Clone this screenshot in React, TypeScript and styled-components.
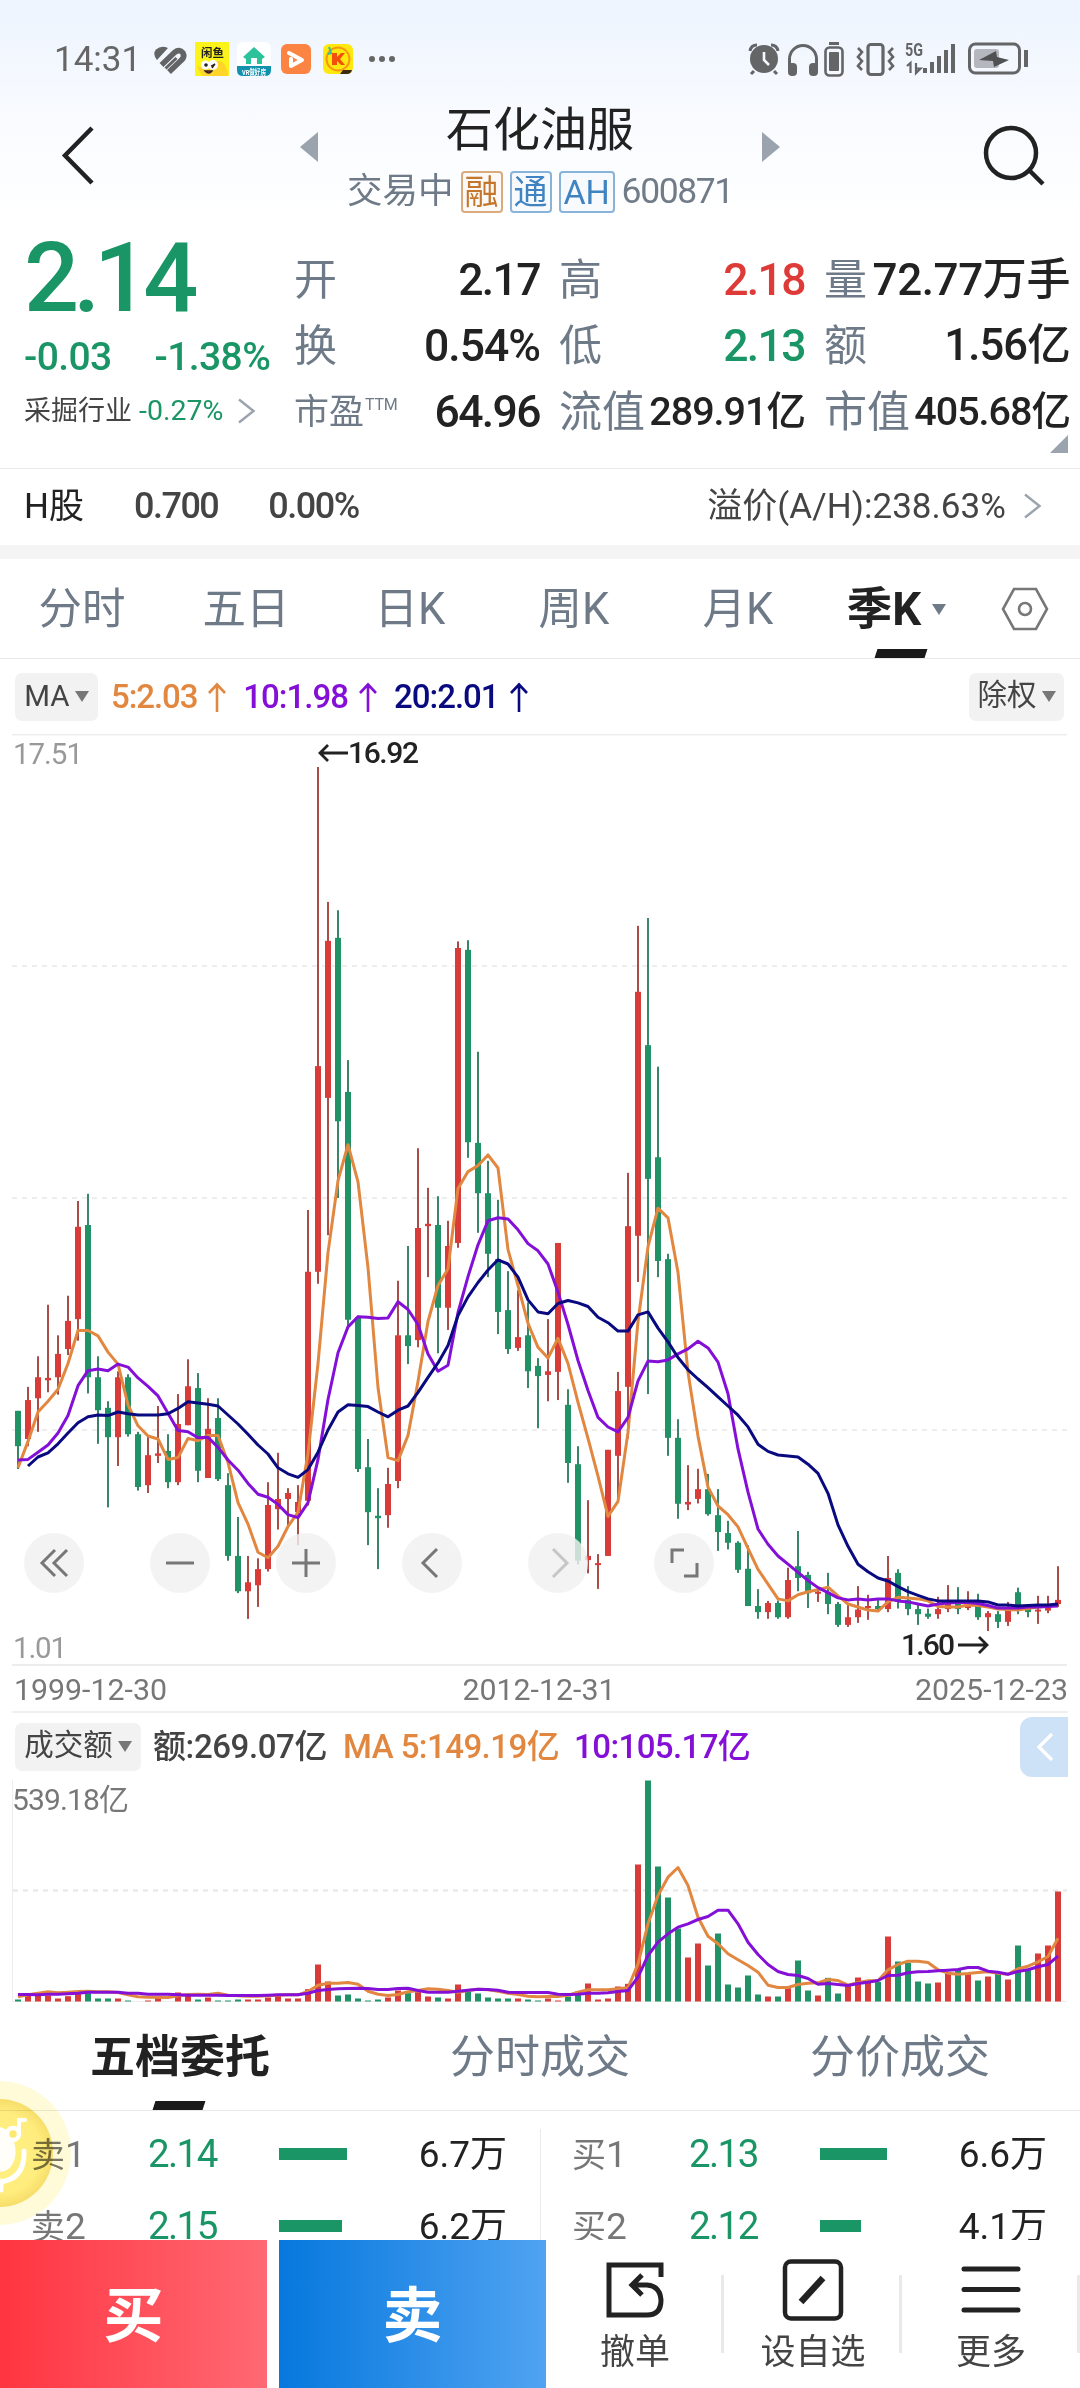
import React from 'react';
import styled, { createGlobalStyle } from 'styled-components';

const INK = '#222';
const SLATE = '#6e7a87';
const GREEN = '#1a9565';
const RED = '#dd3a38';
const ORANGE = '#e2873f';
const PURPLE = '#8410d8';
const NAVY = '#0a0a80';
const LINE = '#ededed';

const Global = createGlobalStyle`
  html, body { margin: 0; padding: 0; background: #fff; }
  body { width: 1080px; height: 2388px; overflow: hidden;
    font-family: Roboto, "Noto Sans CJK SC", sans-serif; color: ${INK}; }
  * { box-sizing: border-box; }
  svg { display: block; flex: none; }
`;

const Screen = styled.main`
  width: 1080px; height: 2388px; display: flex; flex-direction: column;
  position: relative; overflow: hidden; background: #fff; white-space: nowrap; line-height: 1;
`;

/* ---------- header ---------- */
const Top = styled.header`
  height: 228px; flex: none; background: linear-gradient(#edf4fe, #f7faff 45%, #fff 95%);
`;
const StatusBar = styled.div`
  height: 118px; padding: 0 52px 0 54px; display: flex; align-items: center; justify-content: space-between;
`;
const Clock = styled.span`font-size: 35px; color: #666; width: 96px;`;
const StatusGroup = styled.div`display: flex; align-items: center;`;
const TitleBar = styled.div`
  height: 110px; display: grid; grid-template-columns: 300px 1fr 300px;
`;
const Side = styled.div<{ $end?: boolean }>`
  display: flex; justify-content: ${p => (p.$end ? 'flex-end' : 'flex-start')}; padding: 4px ${p => (p.$end ? 32 : 58)}px 0;
`;
const Middle = styled.div`display: flex; flex-direction: column; align-items: center;`;
const TitleRow = styled.div`
  width: 480px; height: 50px; display: flex; align-items: flex-start; justify-content: space-between;
`;
const StockName = styled.h1`margin: -13px 0 0; font-size: 47px; line-height: 50px; font-weight: 400;`;
const Arrow = styled.svg`margin-top: 14px;`;
const SubRow = styled.div`
  height: 50px; margin-top: -1px; display: flex; align-items: center; gap: 7px; font-size: 35.5px; color: ${SLATE};
`;
const Tag = styled.span<{ $c: string; $w: number }>`
  width: ${p => p.$w}px; height: 42px; border: 2px solid ${p => p.$c}99; border-radius: 4px; color: ${p => p.$c};
  background: ${p => p.$c}08; display: flex; align-items: center; justify-content: center; font-size: 34px;
`;
const Code = styled.span`font-size: 35.5px; letter-spacing: -1.4px; color: #717c88;`;

/* ---------- quote ---------- */
const Quote = styled.section`
  height: 241px; flex: none; border-bottom: 1px solid #eaeaea; display: flex; position: relative;
`;
const QuoteMain = styled.div`width: 294px; padding: 3px 0 0 24px;`;
const Price = styled.div`
  height: 94px; display: flex; align-items: center; font-size: 97px; font-weight: 500; letter-spacing: -6px; color: ${GREEN};
`;
const Change = styled.div`
  height: 64px; display: flex; align-items: center; gap: 43px; font-size: 39px; font-weight: 500; letter-spacing: -0.6px; color: ${GREEN};
`;
const Sector = styled.div`
  height: 44px; display: flex; align-items: center; font-size: 27px; color: #444;
  em { font-style: normal; font-size: 28.5px; color: ${GREEN}; margin: 0 14px 0 7px; letter-spacing: 0; }
`;
const QuoteGrid = styled.div`
  flex: 1; padding: 19px 9px 0 0; display: grid; grid-template-columns: 246px 246px 246px;
  column-gap: 19px; grid-auto-rows: 66px;
`;
const Cell = styled.div`display: flex; align-items: center; justify-content: space-between;`;
const Label = styled.span<{ $small?: boolean }>`
  font-size: ${p => (p.$small ? 35 : 43)}px; color: ${SLATE}; display: flex;
  sup { font-size: 16px; line-height: 1; margin: 2px 0 0 1px; letter-spacing: -0.3px; }
`;
const Value = styled.span<{ $c?: string; $size?: number; $ls?: number }>`
  font-size: ${p => p.$size ?? 44.5}px; font-weight: 500; color: ${p => p.$c ?? INK}; letter-spacing: ${p => p.$ls ?? -1.6}px;
`;
const Corner = styled.svg`position: absolute; right: 12px; bottom: 15px;`;

const HShare = styled.section`
  height: 76px; flex: none; padding: 0 38px 2px 24px; display: flex; align-items: center; justify-content: space-between;
  font-size: 35px; color: #444;
`;
const HGroup = styled.div`
  display: flex; align-items: center;
  b { font-weight: 500; font-size: 36px; letter-spacing: -1.5px; margin-left: 50px; }
  span { color: ${INK}; }
`;
const Premium = styled.div`display: flex; align-items: center; gap: 17px; letter-spacing: 0.05px;`;
const Band = styled.div`height: 14px; flex: none; background: #f4f4f4;`;

/* ---------- period tabs ---------- */
const Tabs = styled.nav<{ $h: number }>`height: ${p => p.$h}px; flex: none; display: flex; border-bottom: 1px solid #e9e9e9;`;
const Tab = styled.div<{ $on?: boolean; $w: number; $size?: number; $shift?: number }>`
  width: ${p => p.$w}px; display: flex; align-items: center; justify-content: center; gap: 11px; position: relative;
  padding: 2px ${p => p.$shift ?? 0}px 0 0;
  font-size: ${p => p.$size ?? 43.5}px; color: ${p => (p.$on ? INK : SLATE)}; font-weight: ${p => (p.$on ? 700 : 400)};
`;
const Mark = styled.i`
  position: absolute; bottom: 0; left: 50%; width: 50px; height: 9px; margin-left: -26px; background: #1a1a1a; transform: skewX(-18deg);
`;
const Settings = styled.div`flex: 1; display: flex; align-items: center; justify-content: center; padding-right: 14px;`;

/* ---------- charts ---------- */
const Indicators = styled.div<{ $h: number; $pr: number }>`
  height: ${p => p.$h}px; flex: none; padding: 0 ${p => p.$pr}px 0 15px; display: flex; align-items: center;
`;
const Picker = styled.button<{ $w: number; $lift?: number }>`
  width: ${p => p.$w}px; height: 48px; flex: none; padding: 0; border: 0; border-radius: 7px; background: #f2f2f2; color: #444;
  display: flex; align-items: center; justify-content: center; gap: 5px; font: 400 29.5px/1 Roboto, "Noto Sans CJK SC", sans-serif;
  span { margin-top: ${p => -(p.$lift ?? 0)}px; }
`;
const Reading = styled.span<{ $c: string; $ml: number; $ls: number }>`
  display: flex; align-items: center; gap: 11px; margin-left: ${p => p.$ml}px; font-size: 33px; font-weight: 500;
  color: ${p => p.$c}; letter-spacing: ${p => p.$ls}px;
`;
const Spacer = styled.div`flex: 1;`;
const Expand = styled.button`
  align-self: flex-start; margin-top: 4px; width: 48px; height: 60px; border: 0; padding: 0 0 0 2px; border-radius: 12px 0 0 12px;
  background: #cde2f7; display: flex; align-items: center; justify-content: center;
`;
const ChartArea = styled.section`height: 932px; flex: none; position: relative;`;
const Controls = styled.div`
  position: absolute; left: 24px; top: 799px; display: flex; gap: 66px;
`;
const Round = styled.button<{ $dim?: boolean }>`
  width: 60px; height: 60px; border: 0; padding: 0; border-radius: 50%; background: rgba(240, 240, 240, 0.82);
  display: flex; align-items: center; justify-content: center; color: ${p => (p.$dim ? '#c6c6c6' : '#777')};
`;
const Dates = styled.div`
  height: 47px; flex: none; margin: 0 12px; padding: 4px 0 0 2px; border-bottom: 2px solid #f0f0f0; display: flex; align-items: center;
  justify-content: space-between; font-size: 30.3px; color: #777;
  span:nth-child(2) { margin-right: 4px; }
`;
const VolumeArea = styled.section`height: 222px; flex: none;`;

/* ---------- order book ---------- */
const Book = styled.section`
  height: 129px; flex: none; display: grid; grid-template-columns: 1fr 1fr; overflow: hidden; padding-top: 18px;
`;
const BookSide = styled.div<{ $right?: boolean }>`
  padding: 0 33px 0 31px; border-left: ${p => (p.$right ? '1px solid #eaeaea' : '0')};
`;
const Order = styled.div`
  height: 72px; margin-top: -11px; margin-bottom: 11px; display: grid; grid-template-columns: 117px 131px 1fr auto; align-items: center;
`;
const Level = styled.span`color: #777; font-size: 37px; span { font-size: 34px; }`;
const OrderPrice = styled.span`color: ${GREEN}; font-size: 38.5px; letter-spacing: -1.6px;`;
const Depth = styled.i<{ $w: number }>`height: 12px; width: ${p => p.$w}px; background: ${GREEN};`;
const Amount = styled.span`font-size: 37px;`;

const Bottom = styled.footer`height: 148px; flex: none; display: flex; background: #fff; position: relative;`;
const Trade = styled.button<{ $from: string; $to: string }>`
  width: 267px; margin-right: 12px; border: 0; padding: 0 0 8px; color: #fff; font: 700 60px "Noto Sans CJK SC", sans-serif;
  background: linear-gradient(90deg, ${p => p.$from}, ${p => p.$to});
  & + & { margin-right: 0; }
`;
const Tool = styled.div`
  width: 178px; position: relative; display: flex; flex-direction: column; align-items: center; padding-top: 16px; font-size: 35px; color: #444;
  svg { margin-bottom: 13px; }
  &::after { content: ''; position: absolute; right: 0; top: 35px; width: 3px; height: 78px; background: #e9e9e9; }
`;
const Float = styled.div`
  position: absolute; left: 0; top: 2081px; width: 72px; height: 144px; overflow: hidden; mix-blend-mode: multiply;
`;

/* ---------- data ---------- */
// Each candle: direction, high, body top, body bottom, low. The two eras are recorded on their own scale.
type Candle = [string, number, number, number, number];
type Scale = { base: number; step: number };
const EARLY: Scale = { base: 6, step: 0.5995 };
const LATE: Scale = { base: 146, step: 0.5102 };
const SPLIT = 67;

const candles: Candle[] = [
  ['g', 1119, 1119, 1178, 1216], ['r', 1079, 1101, 1166, 1178], ['r', 1028, 1063, 1098, 1154], ['r', 942, 1064, 1068, 1088],
  ['r', 993, 1024, 1063, 1092], ['r', 927, 969, 1016, 1026], ['r', 769, 812, 966, 1002], ['g', 757, 809, 1063, 1090],
  ['g', 1028, 1063, 1118, 1174], ['g', 1103, 1114, 1163, 1280], ['r', 1053, 1063, 1163, 1211], ['g', 1058, 1063, 1158, 1162],
  ['g', 1154, 1158, 1246, 1252], ['r', 1162, 1193, 1243, 1256], ['r', 1111, 1190, 1194, 1206], ['g', 1158, 1186, 1238, 1248],
  ['r', 1091, 1141, 1238, 1243], ['r', 1033, 1078, 1143, 1143], ['g', 1056, 1081, 1219, 1238], ['r', 1098, 1149, 1231, 1231],
  ['g', 1098, 1131, 1233, 1236], ['g', 1223, 1243, 1361, 1369], ['g', 1296, 1361, 1420, 1423], ['r', 1361, 1405, 1420, 1466],
  ['r', 1365, 1383, 1410, 1446], ['r', 1238, 1276, 1383, 1387], ['r', 1189, 1266, 1283, 1317], ['r', 1248, 1256, 1266, 1310],
  ['r', 1243, 1271, 1288, 1343], ['r', 784, 887, 1269, 1277], ['r', 45, 544, 887, 907], ['r', 270, 335, 597, 826],
  ['g', 284, 330, 636, 764], ['g', 534, 587, 967, 980], ['g', 960, 963, 1216, 1221], ['g', 1166, 1213, 1288, 1343],
  ['g', 1248, 1294, 1298, 1383], ['r', 1214, 1241, 1293, 1314], ['r', 902, 993, 1236, 1248], ['g', 844, 993, 1011, 1041],
  ['r', 681, 814, 1001, 1013], ['r', 747, 807, 811, 896], ['g', 761, 809, 947, 1023], ['r', 802, 844, 947, 984],
  ['r', 336, 347, 839, 847], ['g', 334, 350, 671, 697], ['g', 520, 672, 756, 822], ['g', 702, 756, 857, 896],
  ['g', 767, 866, 954, 991], ['g', 886, 951, 1016, 1024], ['r', 918, 996, 1014, 1019], ['g', 938, 993, 1053, 1081],
  ['g', 1031, 1044, 1061, 1148], ['r', 966, 1053, 1059, 1103], ['r', 839, 839, 1054, 1101], ['g', 1083, 1109, 1206, 1239],
  ['g', 1178, 1208, 1369, 1375], ['r', 1268, 1361, 1368, 1390], ['r', 1358, 1373, 1376, 1416], ['r', 1184, 1184, 1361, 1361],
  ['r', 1054, 1086, 1194, 1270], ['r', 722, 811, 1079, 1165], ['r', 310, 420, 827, 904], ['g', 297, 509, 732, 1091],
  ['g', 545, 696, 869, 896], ['g', 857, 866, 1164, 1194], ['g', 1133, 1164, 1274, 1299],
  ['r', 1147, 1219, 1224, 1235], ['r', 1154, 1194, 1213, 1222], ['g', 1164, 1194, 1243, 1246], ['g', 1194, 1245, 1278, 1315],
  ['g', 1256, 1280, 1299, 1312], ['g', 1296, 1299, 1352, 1358], ['g', 1304, 1350, 1423, 1423], ['g', 1390, 1423, 1435, 1448],
  ['r', 1413, 1417, 1435, 1448], ['g', 1412, 1417, 1445, 1448], ['r', 1348, 1372, 1445, 1448], ['g', 1276, 1345, 1368, 1394],
  ['g', 1356, 1362, 1398, 1427], ['r', 1385, 1395, 1399, 1415], ['g', 1358, 1395, 1419, 1439], ['g', 1415, 1419, 1460, 1464],
  ['r', 1420, 1445, 1460, 1464], ['r', 1384, 1430, 1445, 1456], ['r', 1401, 1423, 1427, 1450], ['g', 1408, 1423, 1429, 1433],
  ['r', 1325, 1368, 1429, 1435], ['g', 1351, 1358, 1415, 1428], ['g', 1384, 1411, 1429, 1441], ['g', 1419, 1429, 1439, 1460],
  ['g', 1428, 1438, 1444, 1448], ['r', 1405, 1429, 1439, 1448], ['r', 1382, 1415, 1429, 1435], ['g', 1386, 1415, 1429, 1439],
  ['r', 1394, 1415, 1427, 1431], ['g', 1399, 1415, 1445, 1450], ['r', 1433, 1437, 1445, 1472], ['g', 1433, 1439, 1454, 1466],
  ['r', 1415, 1427, 1454, 1462], ['g', 1387, 1396, 1425, 1439], ['g', 1421, 1425, 1435, 1445], ['r', 1403, 1430, 1433, 1458],
  ['r', 1403, 1425, 1432, 1437], ['r', 1345, 1411, 1419, 1425],
];

const ma5 = [1214, 1170, 1121, 1103, 1083, 1040, 985, 985, 994, 1021, 1041, 1109, 1144, 1161, 1166, 1200, 1197, 1165, 1169, 1160, 1160, 1205, 1272, 1308, 1355, 1364, 1345, 1312, 1288, 1190, 1040, 855, 735, 675, 737, 880, 1080, 1197, 1202, 1160, 1070, 970, 910, 882, 748, 720, 710, 692, 714, 850, 910, 973, 1013, 1031, 998, 1040, 1105, 1165, 1228, 1295, 1270, 1155, 970, 845, 781, 797, 888,
  965, 1090, 1190, 1227, 1244, 1268, 1310, 1351, 1380, 1409, 1413, 1401, 1395, 1391, 1386, 1403, 1419, 1425, 1431, 1433, 1415, 1406, 1407, 1409, 1413, 1424, 1425, 1425, 1421, 1422, 1425, 1429, 1430, 1431, 1428, 1425, 1423, 1420];
const ma10 = [1201, 1200, 1188, 1176, 1156, 1127, 1077, 1052, 1049, 1052, 1041, 1046, 1064, 1078, 1094, 1123, 1152, 1154, 1164, 1163, 1180, 1201, 1218, 1240, 1258, 1263, 1275, 1292, 1297, 1272, 1200, 1100, 1022, 979, 962, 963, 965, 964, 937, 950, 975, 1024, 1053, 1043, 955, 895, 842, 802, 797, 799, 817, 840, 852, 874, 921, 975, 1035, 1085, 1130, 1146, 1154, 1130, 1069, 1036, 1037, 1034, 1024,
  919, 904, 917, 945, 1007, 1115, 1200, 1272, 1302, 1325, 1341, 1357, 1373, 1387, 1397, 1407, 1411, 1409, 1411, 1409, 1409, 1413, 1415, 1419, 1423, 1419, 1417, 1416, 1416, 1418, 1422, 1427, 1427, 1427, 1425, 1425, 1424, 1423];
const ma20 = [1211, 1196, 1189, 1174, 1156, 1139, 1129, 1126, 1127, 1121, 1124, 1126, 1126, 1126, 1124, 1115, 1104, 1106, 1108, 1111, 1126, 1141, 1158, 1176, 1191, 1214, 1224, 1230, 1217, 1188, 1151, 1121, 1109, 1110, 1112, 1121, 1129, 1118, 1111, 1088, 1063, 1039, 1010, 960, 929, 905, 884, 867, 874, 896, 934, 954, 957, 940, 935, 939, 945, 963, 972, 986, 986, 959, 954, 981, 1004, 1030,
  960, 978, 995, 1013, 1031, 1049, 1072, 1106, 1120, 1127, 1129, 1131, 1145, 1163, 1202, 1264, 1306, 1341, 1356, 1368, 1374, 1385, 1395, 1402, 1409, 1413, 1413, 1413, 1413, 1413, 1415, 1421, 1421, 1423, 1422, 1421, 1421, 1419];

const volume = [1077, 1066, 1066, 1065, 1074, 1067, 1058, 1058, 1074, 1074, 1074, 1080, 1083, 1080, 1072, 1083, 1056, 1062, 1077, 1071, 1080, 1080, 1077, 1077, 1077, 1071, 1066, 1074, 1074, 1046, 972, 1023, 1065, 1062, 1074, 1080, 1077, 1071, 1050, 1058, 1055, 1068, 1071, 1074, 1032, 1053, 1059, 1071, 1074, 1074, 1074, 1077, 1080, 1074, 1080, 1068, 1053, 1029, 1077, 1074, 1038, 1030, 672, 420, 678, 771, 864, 951, 909, 975, 879, 1032, 1041, 1005, 1062, 1068, 1068, 1043, 960, 1050, 1065, 1012, 1059, 1034, 1011, 1020, 1024, 888, 963, 967, 1023, 1029, 1026, 998, 988, 1001, 1020, 1008, 1000, 1017, 915, 985, 939, 915, 753];
const vol5 = [1069, 1063, 1058, 1054, 1057, 1055, 1053, 1052, 1054, 1054, 1056, 1063, 1069, 1070, 1070, 1071, 1066, 1062, 1061, 1062, 1058, 1064, 1066, 1067, 1067, 1066, 1064, 1063, 1063, 1053, 1034, 1028, 1028, 1026, 1031, 1052, 1061, 1065, 1062, 1054, 1050, 1045, 1046, 1050, 1055, 1050, 1046, 1048, 1052, 1058, 1062, 1067, 1069, 1068, 1068, 1064, 1055, 1048, 1048, 1048, 1045, 1042, 970, 850, 765, 710, 681, 735, 830, 887, 910, 940, 958, 975, 995, 1034, 1041, 1041, 1032, 1028, 1027, 1017, 1020, 1034, 1027, 1021, 1021, 988, 972, 962, 962, 966, 988, 998, 1001, 999, 996, 994, 998, 1001, 985, 977, 964, 948, 893];
const vol10 = [1062, 1062, 1063, 1061, 1061, 1060, 1058, 1055, 1055, 1055, 1055, 1058, 1058, 1061, 1061, 1061, 1063, 1064, 1064, 1064, 1064, 1065, 1065, 1065, 1065, 1064, 1063, 1063, 1063, 1058, 1050, 1047, 1045, 1044, 1043, 1044, 1047, 1047, 1044, 1043, 1050, 1055, 1055, 1055, 1052, 1049, 1046, 1047, 1049, 1055, 1056, 1056, 1056, 1056, 1061, 1062, 1061, 1058, 1058, 1057, 1053, 1050, 1010, 945, 905, 880, 860, 850, 837, 828, 809, 809, 850, 905, 942, 972, 993, 1002, 1005, 1014, 1031, 1029, 1032, 1035, 1029, 1025, 1020, 1005, 1004, 997, 994, 993, 991, 989, 987, 981, 981, 992, 995, 1001, 993, 988, 979, 972, 947];

const xAt = (i: number) => 18 + i * 10;
const yAt = (i: number, v: number) => {
  const s = i < SPLIT ? EARLY : LATE;
  return s.base + v * s.step;
};
const volY = (v: number) => (v - 420) / 3 + 0.5;
const path = (vals: number[], start: number, y: (i: number, v: number) => number) =>
  vals.map((v, k) => `${xAt(k + start)},${y(k + start, v).toFixed(1)}`).join(' ');

/* ---------- small drawings ---------- */
const Chevron = ({ w, h, c, sw, left }: { w: number; h: number; c: string; sw: number; left?: boolean }) => (
  <svg width={w} height={h} fill="none" stroke={c} strokeWidth={sw}>
    <path d={left ? `M${w - 2} 2L3 ${h / 2}L${w - 2} ${h - 2}` : `M2 1.5L${w - 2.5} ${h / 2}L2 ${h - 1.5}`} />
  </svg>
);
const Down = ({ c = '#777', w = 14, h = 11 }: { c?: string; w?: number; h?: number }) => (
  <svg width={w} height={h}><path d={`M0 0H${w}L${w / 2} ${h}Z`} fill={c} /></svg>
);
const Up = () => (
  <svg width="18" height="30" fill="none" stroke="currentColor" strokeWidth="2.6"><path d="M9 30V2M1 11L9 2.500L17 11" /></svg>
);

const LeftIcons = () => (
  <svg width="250" height="40" viewBox="150 40 250 40">
    <path d="M157 61Q152 55 156 50.500Q161 46 168 49Z" fill="#636466" />
    <path d="M161.500 66L174.500 53.500Q179.500 49.500 183 54Q185 58 181.500 61L169 73" fill="none" stroke="#636466" strokeWidth="5.600" strokeLinejoin="round" />
    <path d="M165.500 69.500L176.500 59" fill="none" stroke="#636466" strokeWidth="3" />
    <rect x="195" y="43" width="34" height="34" fill="#fbf31a" />
    <path d="M203 77Q198 71 197 67L203 69Q206 60 214 63Q226 58 228 77Z" fill="#ffd52a" />
    <circle cx="205.500" cy="66" r="4.500" fill="#fff" /><circle cx="213" cy="66" r="5" fill="#fff" />
    <circle cx="206" cy="66" r="1.800" fill="#222" /><path d="M211 67L215 65L212 69M205 72Q209 76 212 72Z" stroke="#322" fill="#c33" strokeWidth="1.300" />
    <text x="201" y="58" fontSize="11.500" fontWeight="700" fill="#222">闲鱼</text>
    <rect x="237" y="43" width="34" height="34" rx="6" fill="#fff" />
    <path d="M243 58L254 48L265 58L262 60V65H257V59H251V65H246V60Z" fill="#2cc29a" />
    <path d="M237 67H271V71Q271 77 265 77H243Q237 77 237 71Z" fill="#1191ac" />
    <text x="242" y="75.500" fontSize="7.500" fontWeight="700" fill="#fff" textLength="24" lengthAdjust="spacingAndGlyphs">VR做好房</text>
    <rect x="281" y="45" width="30" height="30" rx="6" fill="#fb8442" />
    <path d="M289 54L302 61L291 67V60" fill="none" stroke="#fff" strokeWidth="4" strokeLinejoin="round" strokeLinecap="round" />
    <rect x="323" y="45" width="30" height="30" rx="6" fill="#ffe80e" />
    <circle cx="338" cy="60" r="11.500" fill="none" stroke="#f59a10" strokeWidth="2" />
    <path d="M332 54H337V58L341 54H345L340 60L345 66H341L337 62V66H332Z" fill="#f4500d" />
    <path d="M329 48L331 54L328 55" stroke="#35bba4" strokeWidth="2" fill="none" />
    <path d="M340 75L343 71H352Q351 75 347 75Z" fill="#3a2a10" />
    <g fill="#666"><circle cx="372" cy="60" r="3" /><circle cx="382" cy="60" r="3" /><circle cx="392" cy="60" r="3" /></g>
  </svg>
);
const RightIcons = () => (
  <svg width="282" height="40" viewBox="746 40 282 40" fill="none" stroke="#646567">
    <circle cx="764" cy="60" r="14" fill="#646567" stroke="none" />
    <path d="M750 52Q751 46 757 46M778 52Q777 46 771 46M754 72L751 75M774 72L777 75" strokeWidth="3" />
    <path d="M764 53V61L769 66" stroke="#f5f8fe" strokeWidth="2.600" />
    <path d="M789.500 68V60A13.500 13.500 0 0 1 816.500 60V68" strokeWidth="3" />
    <rect x="788" y="64" width="9" height="13" rx="4" fill="#646567" stroke="none" /><rect x="809" y="64" width="9" height="13" rx="4" fill="#646567" stroke="none" />
    <path d="M829 44.500H839" strokeWidth="3" /><rect x="825.500" y="48.500" width="17" height="28" rx="4" strokeWidth="2.600" />
    <rect x="829" y="53" width="10" height="19" rx="1" fill="#646567" stroke="none" />
    <rect x="868" y="45.500" width="15" height="30" rx="3" strokeWidth="3.200" />
    <path d="M858 49L862 53L858 58L862 62L858 67L862 71M893 49L889 53L893 58L889 62L893 67L889 71" strokeWidth="2.600" />
    <text x="905" y="57" fontSize="19" fontWeight="700" fill="#646567" stroke="none" textLength="18" lengthAdjust="spacingAndGlyphs">5G</text>
    <path d="M907 67L910.500 64V74M916 64V74L920.500 69.500H916" strokeWidth="2.200" />
    <path d="M925 69V74M932 63V74M939 57V74M946 51V74M953 45V74" strokeWidth="4" />
    <rect x="969.500" y="45" width="50" height="29" rx="6" strokeWidth="3" />
    <rect x="974" y="50" width="25" height="19" rx="3" fill="#b4b7bd" stroke="none" />
    <path d="M979 61L996 52L997 58L1009 61L994 68L993 62Z" fill="#505153" stroke="none" />
    <path d="M1026 51V68" strokeWidth="4" />
  </svg>
);

const PriceChart = () => (
  <svg width="1080" height="932">
    <path d="M12 .5H1067M12 931H1067" stroke={LINE} strokeWidth="2" />
    <path d="M12 232H1067M12 464H1067M12 696H1067" stroke={LINE} strokeWidth="2" strokeDasharray="5 5" />
    {candles.map(([d, hi, top, bot, lo], i) => {
      const y = (v: number) => yAt(i, v);
      return (
        <g key={i}>
          <rect x={xAt(i) - 1} width="2" y={y(hi)} height={y(lo) - y(hi)} fill={d === 'r' ? '#a94d49' : '#3a8467'} />
          <rect x={xAt(i) - 3} width="6" y={y(top)} height={Math.max(2, y(bot) - y(top))} fill={d === 'r' ? '#d83b38' : '#219166'} />
        </g>
      );
    })}
    <g fill="none" strokeWidth="3" strokeLinejoin="round">
      <polyline points={path(ma5, 0, yAt)} stroke={ORANGE} />
      <polyline points={path(ma10, 0, yAt)} stroke={PURPLE} />
      <polyline points={path(ma20, 1, yAt)} stroke={NAVY} />
    </g>
    <g fontSize="29.500" fill="#999">
      <text x="13" y="30" textLength="70">17.51</text>
      <text x="13" y="924" textLength="54">1.01</text>
    </g>
    <g fontSize="30" fontWeight="500" fill={INK}>
      <text x="348" y="29" textLength="71">16.92</text>
      <text x="901" y="921" textLength="54">1.60</text>
    </g>
    <path d="M348 19H320M328 11L320 19L328 27M958 911H987M979 903L987 911L979 919" fill="none" stroke={INK} strokeWidth="2.800" />
  </svg>
);
const VolumeChart = () => (
  <svg width="1080" height="222">
    <path d="M12.500 0V221.500H1067" stroke={LINE} fill="none" />
    <path d="M13 110.500H1067" stroke="#e6e6e6" strokeWidth="2" strokeDasharray="5 5" />
    <text x="12" y="30" fontSize="30" fill="#777" textLength="117">539.18亿</text>
    {volume.map((v, i) => (
      <rect key={i} x={xAt(i) - 3} width="6" y={volY(v)} height={volY(1083) - volY(v)} fill={candles[i][0] === 'r' ? '#d83b38' : '#219166'} />
    ))}
    <g fill="none" strokeWidth="3" strokeLinejoin="round">
      <polyline points={path(vol5, 0, (_, v) => volY(v))} stroke={ORANGE} />
      <polyline points={path(vol10, 0, (_, v) => volY(v))} stroke={PURPLE} />
    </g>
  </svg>
);

const controls = [
  'M31 17L18 30L31 43M43 17L30 30L43 43', 'M16 30H44', 'M16 30H44M30 16V44', 'M35 16L21 30L35 44', 'M25 16L39 30L25 44',
  'M18 30V17H30M30 43H43V30',
];
const quotes: { l: string; v: string; c?: string; ttm?: boolean; size?: number; ls?: number }[] = [
  { l: '开', v: '2.17' }, { l: '高', v: '2.18', c: RED }, { l: '量', v: '72.77万手', size: 44, ls: -0.4 },
  { l: '换', v: '0.54%', ls: -1 }, { l: '低', v: '2.13', c: GREEN }, { l: '额', v: '1.56亿', size: 43.5, ls: -0.8 },
  { l: '市盈', v: '64.96', ttm: true }, { l: '流值', v: '289.91亿', size: 39.5, ls: -1 }, { l: '市值', v: '405.68亿', size: 39.5, ls: -1 },
];
const sells = [['卖', '1', '2.14', 68, '6.7万'], ['卖', '2', '2.15', 63, '6.2万']] as const;
const buys = [['买', '1', '2.13', 67, '6.6万'], ['买', '2', '2.12', 41, '4.1万']] as const;

const Orders = ({ rows, right }: { rows: typeof sells | typeof buys; right?: boolean }) => (
  <BookSide $right={right}>
    {rows.map(([side, n, price, w, amount]) => (
      <Order key={n}>
        <Level><span>{side}</span>{n}</Level>
        <OrderPrice>{price}</OrderPrice>
        <Depth $w={w} />
        <Amount>{amount}</Amount>
      </Order>
    ))}
  </BookSide>
);

export default function App() {
  return (
    <Screen>
      <Global />
      <Top>
        <StatusBar>
          <StatusGroup><Clock>14:31</Clock><LeftIcons /></StatusGroup>
          <RightIcons />
        </StatusBar>
        <TitleBar>
          <Side>
            <svg width="40" height="70" fill="none" stroke={INK} strokeWidth="4.500"><path d="M34 6L7 33.500L34 61" /></svg>
          </Side>
          <Middle>
            <TitleRow>
              <Arrow width="18" height="30"><path d="M18 0V30L0 15Z" fill="#9aa3ae" /></Arrow>
              <StockName>石化油服</StockName>
              <Arrow width="18" height="30"><path d="M0 0V30L18 15Z" fill="#9aa3ae" /></Arrow>
            </TitleRow>
            <SubRow>
              <span>交易中</span>
              <Tag $c="#c4762c" $w={42}>融</Tag>
              <Tag $c="#3f83c0" $w={42}>通</Tag>
              <Tag $c="#3f83c0" $w={56}>AH</Tag>
              <Code>600871</Code>
            </SubRow>
          </Middle>
          <Side $end>
            <svg width="66" height="66" fill="none" stroke={INK} strokeWidth="4.500"><circle cx="29" cy="31" r="25" /><path d="M47 48L61 62" /></svg>
          </Side>
        </TitleBar>
      </Top>

      <Quote>
        <QuoteMain>
          <Price>2.14</Price>
          <Change><span>-0.03</span><span>-1.38%</span></Change>
          <Sector>采掘行业<em>-0.27%</em><Chevron w={19} h={26} c="#9aa3ae" sw={2.4} /></Sector>
        </QuoteMain>
        <QuoteGrid>
          {quotes.map(q => (
            <Cell key={q.l}>
              <Label $small={q.ttm}>{q.l}{q.ttm && <sup>TTM</sup>}</Label>
              <Value $c={q.c} $size={q.size} $ls={q.ls}>{q.v}</Value>
            </Cell>
          ))}
        </QuoteGrid>
        <Corner width="18" height="18"><path d="M18 0V18H0Z" fill="#9aa3ae" /></Corner>
      </Quote>

      <HShare>
        <HGroup><span>H股</span><b>0.700</b><b>0.00%</b></HGroup>
        <Premium>溢价(A/H):238.63%<Chevron w={19} h={26} c="#9aa3ae" sw={2.4} /></Premium>
      </HShare>
      <Band />

      <Tabs $h={100}>
        {['分时', '五日', '日K', '周K', '月K'].map(t => <Tab key={t} $w={164}>{t}</Tab>)}
        <Tab $w={164} $on $size={45.5} $shift={11}>季K<Down c={SLATE} /><Mark /></Tab>
        <Settings>
          <svg width="48" height="44" fill="none" stroke="#777" strokeWidth="2.600"><path d="M13 2H35L46 22L35 42H13L2 22Z" /><circle cx="24" cy="22" r="6" /></svg>
        </Settings>
      </Tabs>

      <Indicators $h={75} $pr={16}>
        <Picker $w={83}>MA<Down /></Picker>
        <Reading $c={ORANGE} $ml={13} $ls={-1.1}>5:2.03<Up /></Reading>
        <Reading $c={PURPLE} $ml={17} $ls={-1}>10:1.98<Up /></Reading>
        <Reading $c={NAVY} $ml={17} $ls={-1}>20:2.01<Up /></Reading>
        <Spacer />
        <Picker $w={95} $lift={2}><span>除权</span><Down /></Picker>
      </Indicators>
      <ChartArea>
        <PriceChart />
        <Controls>
          {controls.map((d, i) => (
            <Round key={i} $dim={i === 4}>
              <svg width="60" height="60" fill="none" stroke="currentColor" strokeWidth="3"><path d={d} /></svg>
            </Round>
          ))}
        </Controls>
      </ChartArea>
      <Dates><span>1999-12-30</span><span>2012-12-31</span><span>2025-12-23</span></Dates>

      <Indicators $h={67} $pr={12}>
        <Picker $w={126} $lift={2}><span>成交额</span><Down /></Picker>
        <Reading $c="#444" $ml={12} $ls={-0.4}>额:269.07亿</Reading>
        <Reading $c={ORANGE} $ml={16} $ls={-0.55}>MA 5:149.19亿</Reading>
        <Reading $c={PURPLE} $ml={15} $ls={-0.6}>10:105.17亿</Reading>
        <Spacer />
        <Expand><Chevron w={18} h={30} c="#fff" sw={3.4} left /></Expand>
      </Indicators>
      <VolumeArea><VolumeChart /></VolumeArea>

      <Tabs $h={109}>
        <Tab $w={360} $size={45} $on>五档委托<Mark /></Tab>
        <Tab $w={360} $size={45}>分时成交</Tab>
        <Tab $w={360} $size={45}>分价成交</Tab>
      </Tabs>
      <Book>
        <Orders rows={sells} />
        <Orders rows={buys} right />
      </Book>

      <Bottom>
        <Trade $from="#ff3541" $to="#ff6973">买</Trade>
        <Trade $from="#0678de" $to="#50a3f1">卖</Trade>
        <Tool>
          <svg width="62" height="66" fill="none" stroke={INK} strokeWidth="5"><path d="M57 21V9H5V59H43Q57 59 57 44Q56 30 43 29H29M38 19L28 29L38 39" /></svg>
          撤单
        </Tool>
        <Tool>
          <svg width="62" height="66" fill="none" stroke={INK} strokeWidth="4.500"><rect x="3" y="5.500" width="56" height="57" rx="6" /><path d="M19 46L41 22" strokeWidth="6.500" /></svg>
          设自选
        </Tool>
        <Tool>
          <svg width="62" height="66" fill="none" stroke={INK} strokeWidth="5" strokeLinecap="round"><path d="M4 13H58M4 33.500H58M4 54H58" /></svg>
          更多
        </Tool>
      </Bottom>
      <Float>
        <svg width="72" height="144">
          <defs>
            <radialGradient id="coin" cx="0" cy="72" r="54" gradientUnits="userSpaceOnUse">
              <stop offset="0" stopColor="#fff07a" /><stop offset="0.750" stopColor="#ffec74" /><stop offset="1" stopColor="#f6da5e" />
            </radialGradient>
          </defs>
          <circle cx="-1" cy="72" r="72" fill="#fff7bd" opacity="0.600" />
          <circle cx="-1" cy="72" r="54" fill="url(#coin)" opacity="0.900" />
          <path d="M0 46Q10 48 14 60Q18 74 12 84Q8 90 0 91Z" fill="#fff" opacity="0.950" />
          <path d="M24 70Q25 98 0 101M1 100V109" fill="none" stroke="#fff" strokeWidth="5" strokeLinecap="round" />
          <circle cx="13" cy="53" r="6" fill="#fde96f" stroke="#fff" strokeWidth="4.500" /><path d="M19 53V39H25" stroke="#fff" strokeWidth="4" fill="none" strokeLinecap="round" />
        </svg>
      </Float>
    </Screen>
  );
}
